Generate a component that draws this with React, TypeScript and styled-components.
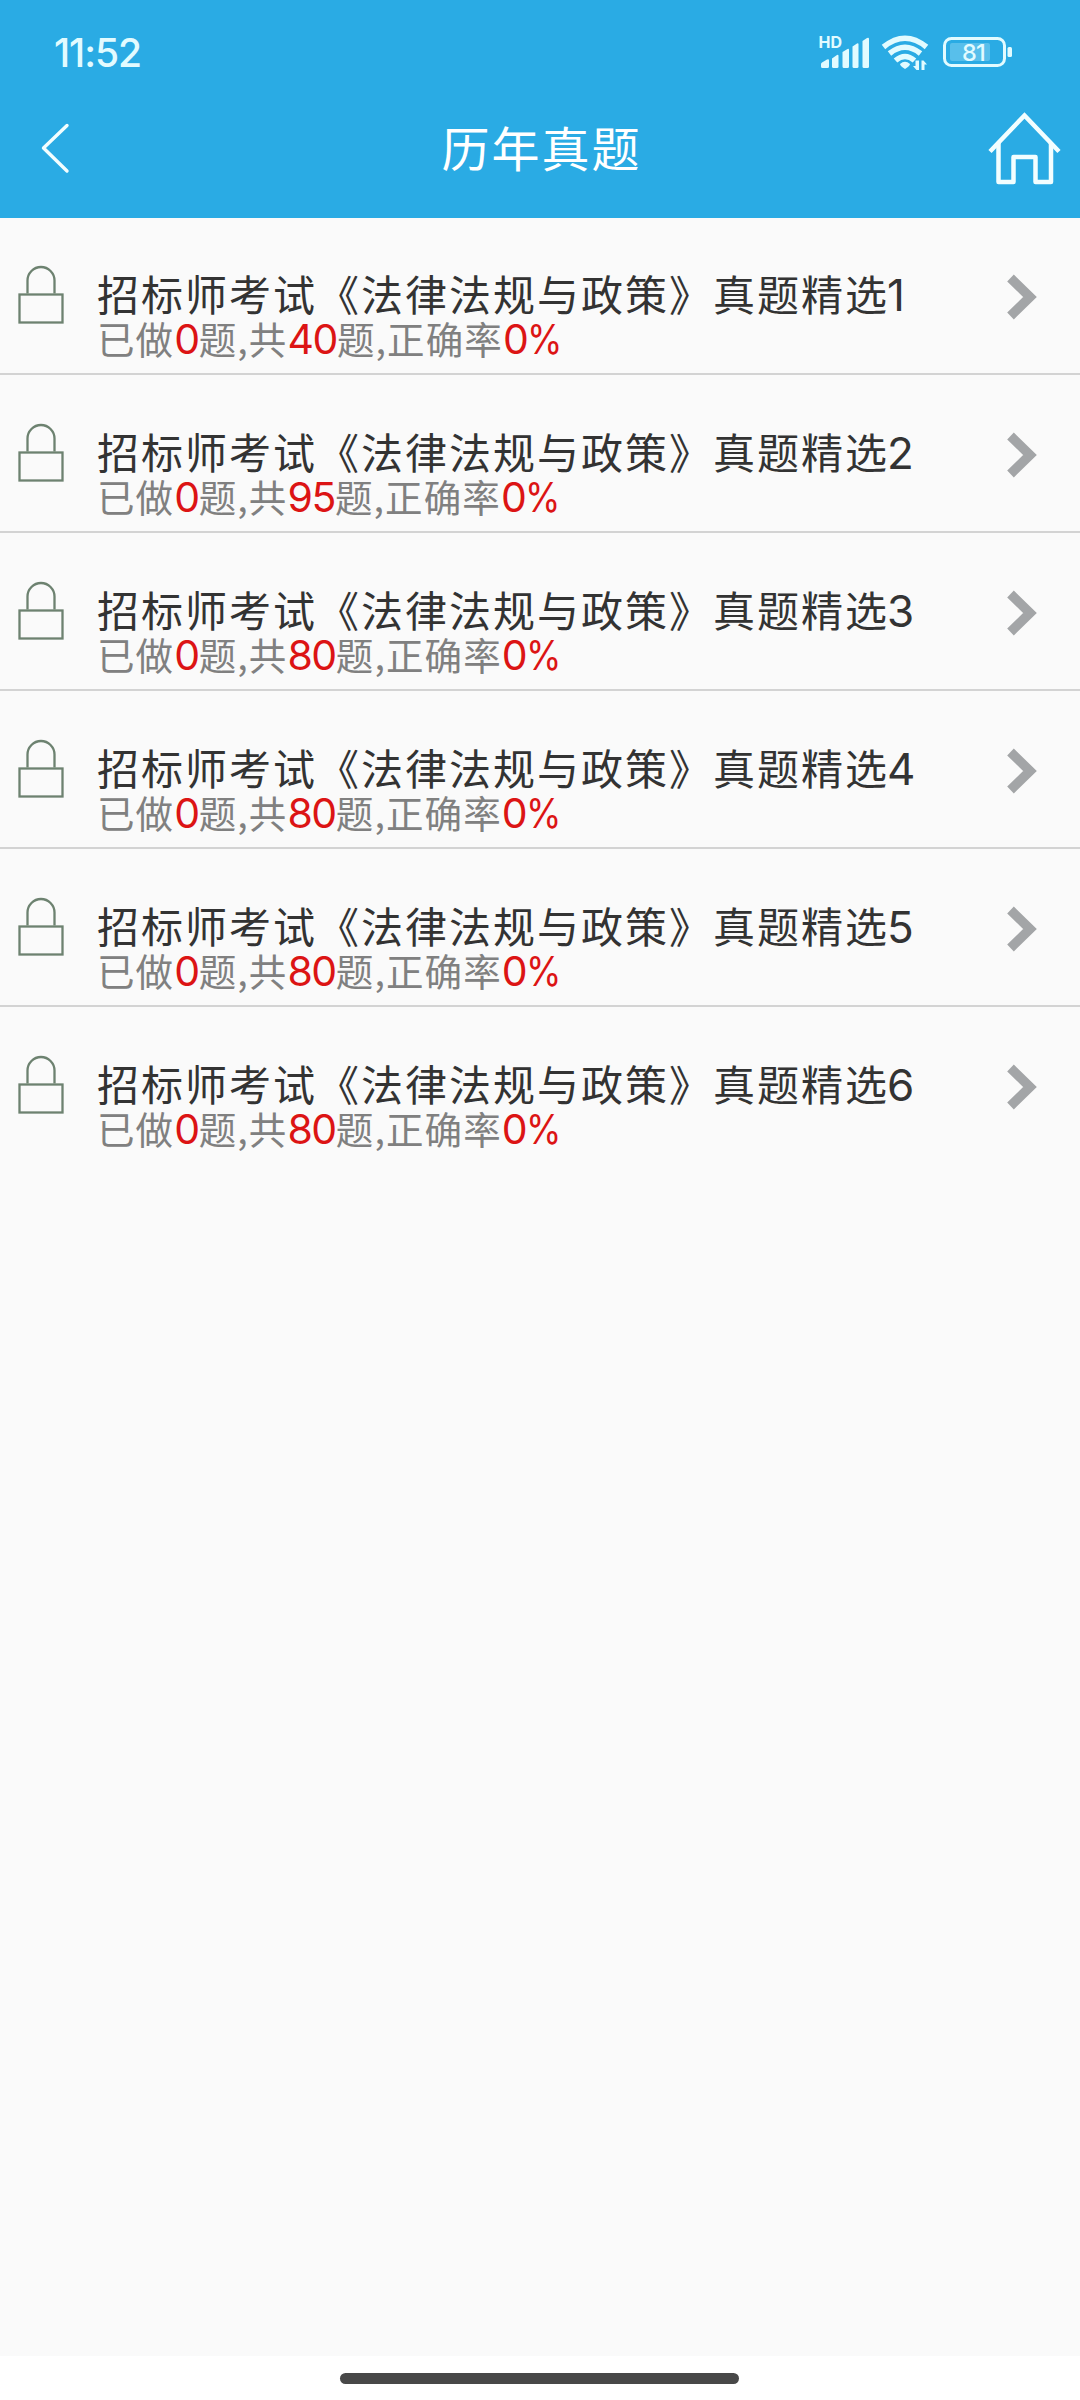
import React from "react";
import styled, { createGlobalStyle } from "styled-components";

const Global = createGlobalStyle`
  * { box-sizing: border-box; }
  html, body { margin: 0; padding: 0; background: #fafafa; }
`;

const cjk = `"Noto Sans CJK SC", sans-serif`;
const latin = `Inter, "Noto Sans CJK SC", sans-serif`;

const Screen = styled.div`
  width: 1080px;
  height: 2400px;
  display: flex;
  flex-direction: column;
  background: #fafafa;
  font-family: ${cjk};
  overflow: hidden;
`;

const Header = styled.header`
  height: 218px;
  background: #2aabe4;
  color: #fff;
  display: flex;
  flex-direction: column;
`;

const StatusBar = styled.div`
  height: 80px;
  padding: 25px 66px 0 54px;
  display: flex;
  justify-content: space-between;
  align-items: flex-start;
`;

const Clock = styled.span`
  font: 500 39px/56px ${latin};
  letter-spacing: -1.1px;
  color: #e2fbff;
`;

const StatusIcons = styled.svg`
  display: block;
  width: 200px;
  height: 40px;
  margin-top: 7px;
`;

const NavBar = styled.nav`
  height: 138px;
  padding: 0 18px 0 36px;
  display: grid;
  grid-template-columns: 80px 1fr 80px;
  align-items: start;
`;

const NavButton = styled.button<{ $end?: boolean }>`
  border: 0;
  padding: 0;
  background: none;
  color: inherit;
  height: 138px;
  display: flex;
  justify-content: ${(p) => (p.$end ? "flex-end" : "flex-start")};
`;

const Title = styled.h1`
  margin: 0;
  padding: 30px 15px 0 0;
  text-align: center;
  font: 400 48px/72px ${cjk};
  letter-spacing: 2px;
`;

const List = styled.ul`
  list-style: none;
  margin: -1px 0 0;
  padding: 0;
  flex: 1;
`;

const Row = styled.li`
  height: 158px;
  padding: 0 41px 0 18px;
  display: grid;
  grid-template-columns: 79px 1fr 34px;
  border-bottom: 2px solid #d3d3d3;
  &:last-child { border-bottom-color: transparent; }
`;

const LockIcon = styled.svg`
  width: 46px;
  height: 60px;
  margin-top: 48px;
`;

const ArrowIcon = styled.svg`
  width: 34px;
  height: 50px;
  margin-top: 55px;
`;

const RowText = styled.div`
  padding-top: 46px;
  white-space: nowrap;
`;

const RowTitle = styled.div`
  height: 52px;
  font: 400 42px/60px ${cjk};
  letter-spacing: 2px;
  color: #333;
`;

const TitleNumber = styled.span`
  font: 400 44px/50px ${latin};
  margin-left: -2px;
`;

const Stats = styled.div`
  font: 400 37.5px/46px ${cjk};
  letter-spacing: 1.1px;
  color: #808080;
`;

const Value = styled.span`
  font: 400 41px/46px ${latin};
  letter-spacing: -1.4px;
  color: #dc1414;
`;

const Percent = styled.span`
  display: inline-block;
  transform: scaleX(0.88);
  transform-origin: left;
`;

const BottomBar = styled.footer`
  height: 44px;
  background: #fff;
  display: flex;
  justify-content: center;
  padding: 17px 1px 0 0;
`;

const Handle = styled.div`
  width: 399px;
  height: 11px;
  border-radius: 6px;
  background: #484848;
`;

const BatteryText = styled.text`
  font: 500 23.5px ${latin};
  letter-spacing: -0.8px;
  fill: #e2fbff;
`;

const HdText = styled.text`
  font: 700 16px ${latin};
  fill: #e2fbff;
`;

const papers = [
  { id: 1, done: 0, total: 40, rate: 0 },
  { id: 2, done: 0, total: 95, rate: 0 },
  { id: 3, done: 0, total: 80, rate: 0 },
  { id: 4, done: 0, total: 80, rate: 0 },
  { id: 5, done: 0, total: 80, rate: 0 },
  { id: 6, done: 0, total: 80, rate: 0 },
];

const Status = () => (
  <StatusIcons viewBox="814 32 200 40" fill="#e2fbff">
    <HdText x="818.500" y="48">HD</HdText>
    <path d="M821 64q0-1 1-1.500l5-3q2-1 2 1v6q0 1.500-1.500 1.500h-5q-1.500 0-1.500-1.500z" />
    <path d="M832 58.500l5-3.500q1.500-1 1.500 1v10.500q0 1.500-1.500 1.500h-3.500q-1.500 0-1.500-1.500z" />
    <path d="M842.500 52l5-3q1.500-1 1.500 1v16.500q0 1.500-1.500 1.500h-3.500q-1.500 0-1.500-1.500z" />
    <path d="M852.500 46.500l4.500-3q1.500-1 1.500 1v22q0 1.500-1.500 1.500h-3q-1.500 0-1.500-1.500z" />
    <path d="M862.500 41l4.500-3q2-1 2 1v27.500q0 1.500-1.500 1.500h-3.500q-1.500 0-1.500-1.500z" />
    <g fill="none" stroke="#e2fbff" strokeWidth="5.500">
      <path d="M883.500 47Q905 29.500 926.500 47" />
      <path d="M889.500 53.500Q905 41 920.500 53.500" />
      <path d="M895.500 60.500Q905 52.500 914.500 60.500" />
    </g>
    <path d="M900 64q5-4.500 10 0q0 2-5 5q-5-3-5-5z" />
    <path d="M919 60.500v9.500h-2.500l-3.500-4h2.500v-5.500zM921.500 70v-9.500h2l3.500 4h-2.500v5.500z" />
    <rect x="944.500" y="38.500" width="60" height="27" rx="7" fill="none" stroke="#e2fbff" strokeWidth="3" />
    <rect x="950" y="43" width="40" height="18" rx="2" fillOpacity=".25" />
    <rect x="1007.500" y="47" width="4.500" height="10" rx="1.500" />
    <BatteryText x="962" y="61">81</BatteryText>
  </StatusIcons>
);

const App = () => (
  <>
    <Global />
    <Screen>
      <Header>
        <StatusBar>
          <Clock>11:52</Clock>
          <Status />
        </StatusBar>
        <NavBar>
          <NavButton aria-label="返回">
            <svg width="40" height="138" viewBox="36 80 40 138" fill="none" stroke="#f2feff" strokeWidth="3.4" strokeLinecap="round" strokeLinejoin="round">
              <path d="M67 125.500L43.500 148L67 171" />
            </svg>
          </NavButton>
          <Title>历年真题</Title>
          <NavButton $end aria-label="首页">
            <svg width="80" height="138" viewBox="982 80 80 138" fill="none" stroke="#f2feff" strokeWidth="4.500">
              <path d="M990 151.500L1024.500 115.500L1059 151.500" />
              <path d="M998.500 143V182H1013.500V157H1035.500V182H1051V143" strokeLinejoin="round" />
            </svg>
          </NavButton>
        </NavBar>
      </Header>
      <List>
        {papers.map((p) => (
          <Row key={p.id}>
            <LockIcon viewBox="18 265 46 60" fill="none" stroke="#6d8270" strokeWidth="2.300">
              <path d="M27.500 293.500V280.500a13.500 13.500 0 0 1 27 0V293.500" />
              <rect x="19.500" y="294.500" width="43" height="28" />
            </LockIcon>
            <RowText>
              <RowTitle>招标师考试《法律法规与政策》真题精选<TitleNumber>{p.id}</TitleNumber></RowTitle>
              <Stats>
                已做<Value>{p.done}</Value>题,共<Value>{p.total}</Value>题,正确率<Value>{p.rate}<Percent>%</Percent></Value>
              </Stats>
            </RowText>
            <ArrowIcon viewBox="1005 272 34 50" fill="none" stroke="#a3a5a7" strokeWidth="9.500">
              <path d="M1010.500 278L1030 297L1010.500 316" />
            </ArrowIcon>
          </Row>
        ))}
      </List>
      <BottomBar>
        <Handle />
      </BottomBar>
    </Screen>
  </>
);

export default App;
